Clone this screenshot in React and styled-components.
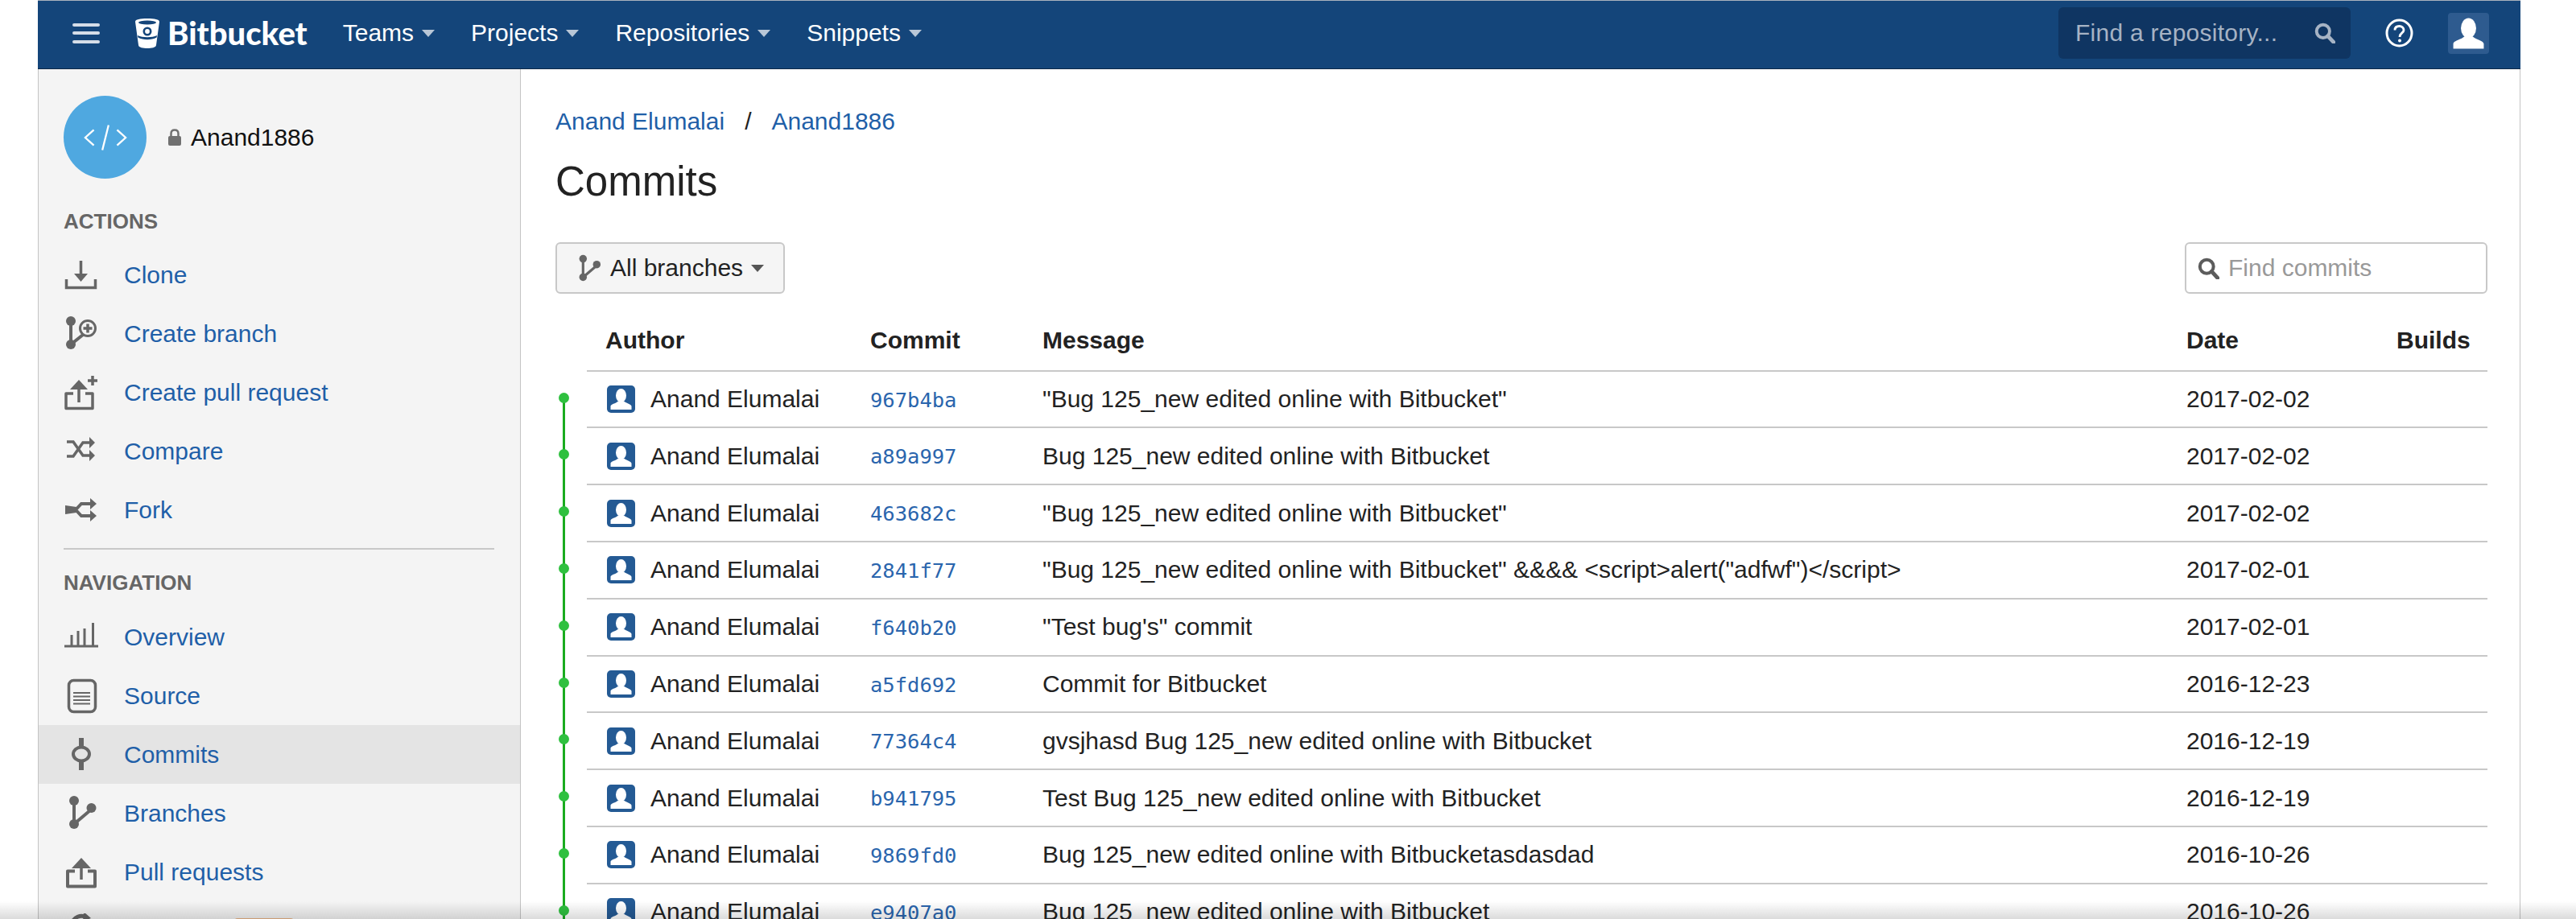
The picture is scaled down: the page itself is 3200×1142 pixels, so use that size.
import styled, { createGlobalStyle } from "styled-components";

const GlobalStyle = createGlobalStyle`
  html, body {
    margin: 0;
    padding: 0;
    background: #fff;
  }
  body {
    font-family: "Liberation Sans", Arial, sans-serif;
    font-size: 30px;
    color: #222;
  }
`;

const Page = styled.div`
  position: relative;
  width: 3200px;
  height: 1142px;
  overflow: hidden;
  background: #fff;
`;

const Shell = styled.div`
  width: 3084px;
  margin-left: 47px;
  border-top: 1px solid #a9b2bd;
`;

/* top bar */
const TopBar = styled.header`
  display: flex;
  align-items: center;
  box-sizing: border-box;
  height: 85px;
  padding: 0 39px 4px 43px;
  background: #14457a;
  border-bottom: 1px solid #0c2747;
`;

const Burger = styled.div`
  display: flex;
  flex-direction: column;
  gap: 6.5px;
  width: 34px;
  margin-right: 43px;

  span {
    height: 4px;
    border-radius: 2px;
    background: #d5dde8;
  }
`;

const Brand = styled.div`
  display: flex;
  align-items: center;
  gap: 9px;
  margin-right: 44px;
  color: #fff;
  font-family: Lato, "Liberation Sans", sans-serif;
  font-weight: 900;
  font-size: 40px;
  line-height: 1;
`;

const TopNav = styled.nav`
  display: flex;
  gap: 45px;
`;

const TopNavItem = styled.a`
  display: flex;
  align-items: center;
  gap: 10px;
  color: #fff;
  line-height: 40px;
`;

const Caret = styled.i`
  width: 0;
  height: 0;
  border-left: ${(p) => p.$size}px solid transparent;
  border-right: ${(p) => p.$size}px solid transparent;
  border-top: ${(p) => p.$size + 1}px solid ${(p) => p.$color};
`;

const RepoSearch = styled.div`
  display: flex;
  align-items: center;
  justify-content: space-between;
  box-sizing: border-box;
  width: 363px;
  height: 64px;
  margin-left: auto;
  padding: 0 19px 0 21px;
  border-radius: 6px;
  background: #0f3562;
  color: #a6b3c4;
  letter-spacing: 0.25px;
`;

const HelpIcon = styled.svg`
  width: 35px;
  height: 36px;
  margin-left: 43px;
`;

const UserBox = styled.div`
  width: 51px;
  height: 51px;
  margin-left: 43px;
  border-radius: 4px;
  background: #2e5b8f;
`;

/* page body */
const Body = styled.div`
  display: flex;
`;

const Sidebar = styled.aside`
  box-sizing: border-box;
  flex: 0 0 600px;
  height: 1060px;
  padding-top: 33px;
  background: #f4f4f4;
  border-left: 1px solid #c4c4c4;
  border-right: 1px solid #c4c4c4;
`;

const RepoHead = styled.div`
  display: flex;
  align-items: center;
  padding-left: 31px;
  color: #111;
`;

const RepoCircle = styled.div`
  display: flex;
  align-items: center;
  justify-content: center;
  width: 103px;
  height: 103px;
  border-radius: 50%;
  background: #4fa8e0;
`;

const LockIcon = styled.svg`
  width: 18px;
  height: 21px;
  margin: 0 11px 0 26px;
`;

const SideLabel = styled.h4`
  margin: ${(p) => p.$top}px 0 ${(p) => p.$bottom}px 31px;
  color: #666;
  font-size: 26px;
  font-weight: 700;
  line-height: 30px;
`;

const SideDivider = styled.hr`
  height: 2px;
  margin: 10px 32px 0 31px;
  border: 0;
  background: #c8c8c8;
`;

const SideItem = styled.a`
  display: flex;
  align-items: center;
  box-sizing: border-box;
  height: 73px;
  padding-left: 31px;
  background: ${(p) => (p.$active ? "#e4e4e4" : "transparent")};
  color: #1f5fa8;
`;

const SideIcon = styled.svg`
  flex: 0 0 44px;
  width: 44px;
  height: 44px;
  margin-right: 31px;
  color: #666;
`;

const NewTag = styled.span`
  margin-left: 15px;
  padding: 0 14px;
  height: 32px;
  border-radius: 4px;
  background: #eab585;
  color: #fff;
  font-size: 20px;
  line-height: 32px;
`;

const Main = styled.main`
  box-sizing: border-box;
  flex: 1;
  height: 1060px;
  padding: 45px 40px 0 43px;
  border-right: 1px solid #c4c4c4;
`;

const Crumbs = styled.div`
  display: flex;
  align-items: center;
  gap: 25px;
  color: #222;
  line-height: 40px;
`;

const Crumb = styled.a`
  color: #1f5fa8;
`;

const Title = styled.h1`
  margin: 25px 0 0;
  color: #222;
  font-size: 51px;
  font-weight: 400;
  line-height: 60px;
`;

const Toolbar = styled.div`
  display: flex;
  align-items: center;
  justify-content: space-between;
  margin-top: 45px;
`;

const BranchButton = styled.button`
  display: flex;
  align-items: center;
  gap: 10px;
  box-sizing: border-box;
  width: 285px;
  height: 64px;
  padding: 0 0 0 26px;
  border: 2px solid #c8c8c8;
  border-radius: 6px;
  background: #f5f5f5;
  color: #222;
  font: inherit;
`;

const BranchIcon = styled.svg`
  width: 30px;
  height: 34px;
  color: #666;
`;

const CommitSearch = styled.div`
  display: flex;
  align-items: center;
  gap: 11px;
  box-sizing: border-box;
  width: 376px;
  height: 64px;
  padding-left: 14px;
  border: 2px solid #c8c8c8;
  border-radius: 6px;
  background: #fff;
  color: #999;
`;

/* commit table */
const Row = styled.div`
  display: flex;
  height: ${(p) => p.$height}px;
`;

const GraphCell = styled.div`
  position: relative;
  flex: 0 0 39px;

  &::before {
    content: ${(p) => (p.$node ? '""' : "none")};
    position: absolute;
    left: 9px;
    top: ${(p) => (p.$first ? "32px" : "0")};
    bottom: 0;
    width: 3px;
    background: #1aab1f;
  }

  &::after {
    content: ${(p) => (p.$node ? '""' : "none")};
    position: absolute;
    left: 4px;
    top: 26px;
    width: 13px;
    height: 13px;
    border-radius: 50%;
    background: #2fc03f;
  }
`;

const Cells = styled.div`
  flex: 1;
  display: grid;
  grid-template-columns: 352px 214px 1421px 261px 1fr;
  align-items: ${(p) => (p.$head ? "start" : "center")};
  box-sizing: border-box;
  padding-top: ${(p) => (p.$head ? "38px" : "0")};
  border-bottom: 2px solid #c8c8c8;
  color: #222;
  font-weight: ${(p) => (p.$head ? 700 : 400)};
  line-height: 40px;
`;

const AuthorCell = styled.div`
  display: flex;
  align-items: center;
  gap: 19px;
  padding-left: ${(p) => (p.$head ? 23 : 25)}px;
`;

const AuthorAvatar = styled.svg`
  width: 35px;
  height: 34px;
`;

const Hash = styled.a`
  color: #2a65ad;
  font-family: "DejaVu Sans Mono", monospace;
  font-size: 25.5px;
`;

const Fade = styled.div`
  position: absolute;
  left: 0;
  right: 0;
  bottom: 0;
  height: 22px;
  background: linear-gradient(to bottom, rgba(0, 0, 0, 0), rgba(0, 0, 0, 0.14));
  pointer-events: none;
`;

const BranchGlyph = () => (
  <>
    <circle cx="13" cy="6" r="6" fill="currentColor" />
    <circle cx="13" cy="35" r="6" fill="currentColor" />
    <circle cx="34.5" cy="15" r="6" fill="currentColor" />
    <path d="M13 6V35L33 18" fill="none" stroke="currentColor" strokeWidth="4" />
  </>
);

const sideIcons = {
  clone: (
    <>
      <path d="M21.5 4V22" stroke="currentColor" strokeWidth="3.5" />
      <path d="M13 20H30L21.5 30Z" fill="currentColor" />
      <path d="M3.5 27V37.5H39.5V27" fill="none" stroke="currentColor" strokeWidth="3.5" />
    </>
  ),
  branchAdd: (
    <>
      <circle cx="9" cy="6" r="6" fill="currentColor" />
      <circle cx="9" cy="35" r="6" fill="currentColor" />
      <path d="M9 6V35L24 23" fill="none" stroke="currentColor" strokeWidth="4" />
      <circle cx="30" cy="15" r="9.5" fill="none" stroke="currentColor" strokeWidth="3" />
      <path d="M30 9.5V20.5M24.5 15H35.5" stroke="currentColor" strokeWidth="3.5" />
    </>
  ),
  pullAdd: (
    <>
      <path d="M8 18L19 6L30 18Z" fill="currentColor" />
      <path d="M19 16V34" stroke="currentColor" strokeWidth="3.5" />
      <path d="M12 23H3V41.5H36V23H27" fill="none" stroke="currentColor" strokeWidth="3.5" strokeLinejoin="round" />
      <path d="M36 1V13M30 7H42" stroke="currentColor" strokeWidth="3.5" />
    </>
  ),
  compare: (
    <>
      <path d="M4 10H12L24 27H33M4 28H12L24 11H33" fill="none" stroke="currentColor" strokeWidth="3.5" />
      <path d="M32 4L39 11L32 18ZM32 20L39 27L32 34Z" fill="currentColor" />
    </>
  ),
  fork: (
    <>
      <path d="M2 16L16 18V25L2 27Z" fill="currentColor" />
      <path d="M15 21.5L22 14H34M15 21.5L22 29H34" fill="none" stroke="currentColor" strokeWidth="4" />
      <path d="M33 7L41 14L33 21ZM33 22L41 29L33 36Z" fill="currentColor" />
    </>
  ),
  overview: (
    <path
      d="M1 33H43M10 33V19M18 33V14M26 33V11M36.5 33V4"
      fill="none"
      stroke="currentColor"
      strokeWidth="3"
    />
  ),
  source: (
    <>
      <rect x="6.5" y="2.5" width="33" height="39" rx="6" fill="none" stroke="currentColor" strokeWidth="3.5" />
      <path d="M12 18H33M12 22.5H33M12 27H33M12 31.5H33" stroke="currentColor" strokeWidth="2" />
    </>
  ),
  commits: (
    <>
      <ellipse cx="22" cy="21" rx="10" ry="8.5" fill="none" stroke="currentColor" strokeWidth="4" />
      <path d="M22 1V12M22 30V41" stroke="currentColor" strokeWidth="6" />
    </>
  ),
  branches: <BranchGlyph />,
  pull: (
    <>
      <path d="M10 17L22 4L34 17Z" fill="currentColor" />
      <path d="M22 15V31" stroke="currentColor" strokeWidth="3.5" />
      <path d="M14 20.5H5V39.5H39V20.5H30" fill="none" stroke="currentColor" strokeWidth="4" strokeLinejoin="round" />
    </>
  ),
  pipelines: (
    <>
      <path d="M10 14C12 4 22 1 28 5" fill="none" stroke="currentColor" strokeWidth="5" />
      <path d="M25 -2L34 6L24 10Z" fill="currentColor" />
    </>
  ),
};

const actions = [
  ["clone", "Clone"],
  ["branchAdd", "Create branch"],
  ["pullAdd", "Create pull request"],
  ["compare", "Compare"],
  ["fork", "Fork"],
];

const navigation = [
  ["overview", "Overview"],
  ["source", "Source"],
  ["commits", "Commits", true],
  ["branches", "Branches"],
  ["pull", "Pull requests"],
];

const commits = [
  ["967b4ba", '"Bug 125_new edited online with Bitbucket"', "2017-02-02"],
  ["a89a997", "Bug 125_new edited online with Bitbucket", "2017-02-02"],
  ["463682c", '"Bug 125_new edited online with Bitbucket"', "2017-02-02"],
  ["2841f77", '"Bug 125_new edited online with Bitbucket" &&&& <script>alert("adfwf")</script>', "2017-02-01"],
  ["f640b20", '"Test bug\'s" commit', "2017-02-01"],
  ["a5fd692", "Commit for Bitbucket", "2016-12-23"],
  ["77364c4", "gvsjhasd Bug 125_new edited online with Bitbucket", "2016-12-19"],
  ["b941795", "Test Bug 125_new edited online with Bitbucket", "2016-12-19"],
  ["9869fd0", "Bug 125_new edited online with Bitbucketasdasdad", "2016-10-26"],
  ["e9407a0", "Bug 125_new edited online with Bitbucket", "2016-10-26"],
];

function SearchGlyph({ size, color }) {
  return (
    <svg width={size} height={size} viewBox="0 0 24 24">
      <circle cx="10" cy="10" r="7.5" fill="none" stroke={color} strokeWidth="3.6" />
      <path d="M15.5 15.5L22 22.5" stroke={color} strokeWidth="4.4" strokeLinecap="round" />
    </svg>
  );
}

function Person() {
  return (
    <>
      <ellipse cx="17.5" cy="12.5" rx="6.5" ry="8.5" fill="#fff" />
      <path d="M4.5 30V26C4.5 23 11 22.5 14 19.5H21C24 22.5 30.500 23 30.500 26V30Z" fill="#fff" />
    </>
  );
}

export default function App() {
  return (
    <Page>
      <GlobalStyle />
      <Shell>
        <TopBar>
          <Burger>
            <span />
            <span />
            <span />
          </Burger>
          <Brand>
            <svg width="32" height="37" viewBox="0 0 32 37">
              <path
                d="M1 4C1 1 7 0 16 0S31 1 31 4L27 33C27 36 21 37 16 37S5 36 5 33Z"
                fill="#fff"
              />
              <ellipse cx="16" cy="5" rx="11" ry="2.6" fill="#14457a" />
              <path d="M4 21C10 24 22 24 28 21L27.6 23.5C21 27 11 27 4.4 23.5Z" fill="#14457a" />
              <circle cx="16" cy="16" r="4.2" fill="none" stroke="#14457a" strokeWidth="2.6" />
            </svg>
            Bitbucket
          </Brand>
          <TopNav>
            {["Teams", "Projects", "Repositories", "Snippets"].map((label) => (
              <TopNavItem key={label}>
                {label}
                <Caret $size={8} $color="rgba(255,255,255,.7)" />
              </TopNavItem>
            ))}
          </TopNav>
          <RepoSearch>
            Find a repository...
            <SearchGlyph size={26} color="#a6b3c4" />
          </RepoSearch>
          <HelpIcon viewBox="0 0 35 36">
            <ellipse cx="17.5" cy="18" rx="15.5" ry="16" fill="none" stroke="#fff" strokeWidth="3" />
            <path
              d="M12 14.5C12 11 14.500 9.500 17.500 9.500S23 11.500 23 14.500C23 18 18 18 18 23"
              fill="none"
              stroke="#fff"
              strokeWidth="2.800"
            />
            <circle cx="18" cy="27.500" r="2" fill="#fff" />
          </HelpIcon>
          <UserBox>
            <svg width="51" height="51" viewBox="0 0 35 34">
              <Person />
            </svg>
          </UserBox>
        </TopBar>
        <Body>
          <Sidebar>
            <RepoHead>
              <RepoCircle>
                <svg width="54" height="32" viewBox="0 0 56 32">
                  <path
                    d="M13 6L2 16L13 26M43 6L54 16L43 26M32 0L24 32"
                    fill="none"
                    stroke="#fff"
                    strokeWidth="2.400"
                  />
                </svg>
              </RepoCircle>
              <LockIcon viewBox="0 0 18 21">
                <path d="M4.500 10V6C4.500 3 6.500 1.500 9 1.500S13.500 3 13.500 6V10" fill="none" stroke="#707070" strokeWidth="2.500" />
                <rect x="1" y="9" width="16" height="12" rx="2" fill="#707070" />
              </LockIcon>
              Anand1886
            </RepoHead>
            <SideLabel $top={38} $bottom={15.5}>ACTIONS</SideLabel>
            {actions.map(([icon, label]) => (
              <SideItem key={label}>
                <SideIcon viewBox="0 0 44 44">{sideIcons[icon]}</SideIcon>
                {label}
              </SideItem>
            ))}
            <SideDivider />
            <SideLabel $top={26} $bottom={16.5}>NAVIGATION</SideLabel>
            {navigation.map(([icon, label, active]) => (
              <SideItem key={label} $active={active}>
                <SideIcon viewBox="0 0 44 44">{sideIcons[icon]}</SideIcon>
                {label}
              </SideItem>
            ))}
            <SideItem>
              <SideIcon viewBox="0 0 44 44">{sideIcons.pipelines}</SideIcon>
              Pipelines
              <NewTag>NEW</NewTag>
            </SideItem>
          </Sidebar>
          <Main>
            <Crumbs>
              <Crumb>Anand Elumalai</Crumb>
              <span>/</span>
              <Crumb>Anand1886</Crumb>
            </Crumbs>
            <Title>Commits</Title>
            <Toolbar>
              <BranchButton>
                <BranchIcon viewBox="6 -1 36 43">
                  <BranchGlyph />
                </BranchIcon>
                All branches
                <Caret $size={8} $color="#555" />
              </BranchButton>
              <CommitSearch>
                <SearchGlyph size={27} color="#5c5c5c" />
                Find commits
              </CommitSearch>
            </Toolbar>
            <Row $height={96.7}>
              <GraphCell />
              <Cells $head>
                <AuthorCell $head>Author</AuthorCell>
                <div>Commit</div>
                <div>Message</div>
                <div>Date</div>
                <div>Builds</div>
              </Cells>
            </Row>
            {commits.map(([hash, message, date], i) => (
              <Row key={hash} $height={70.8}>
                <GraphCell $node $first={i === 0} />
                <Cells>
                  <AuthorCell>
                    <AuthorAvatar viewBox="0 0 35 34">
                      <rect width="35" height="34" rx="5" fill="#245a94" />
                      <Person />
                    </AuthorAvatar>
                    Anand Elumalai
                  </AuthorCell>
                  <div>
                    <Hash>{hash}</Hash>
                  </div>
                  <div>{message}</div>
                  <div>{date}</div>
                  <div />
                </Cells>
              </Row>
            ))}
          </Main>
        </Body>
      </Shell>
      <Fade />
    </Page>
  );
}
